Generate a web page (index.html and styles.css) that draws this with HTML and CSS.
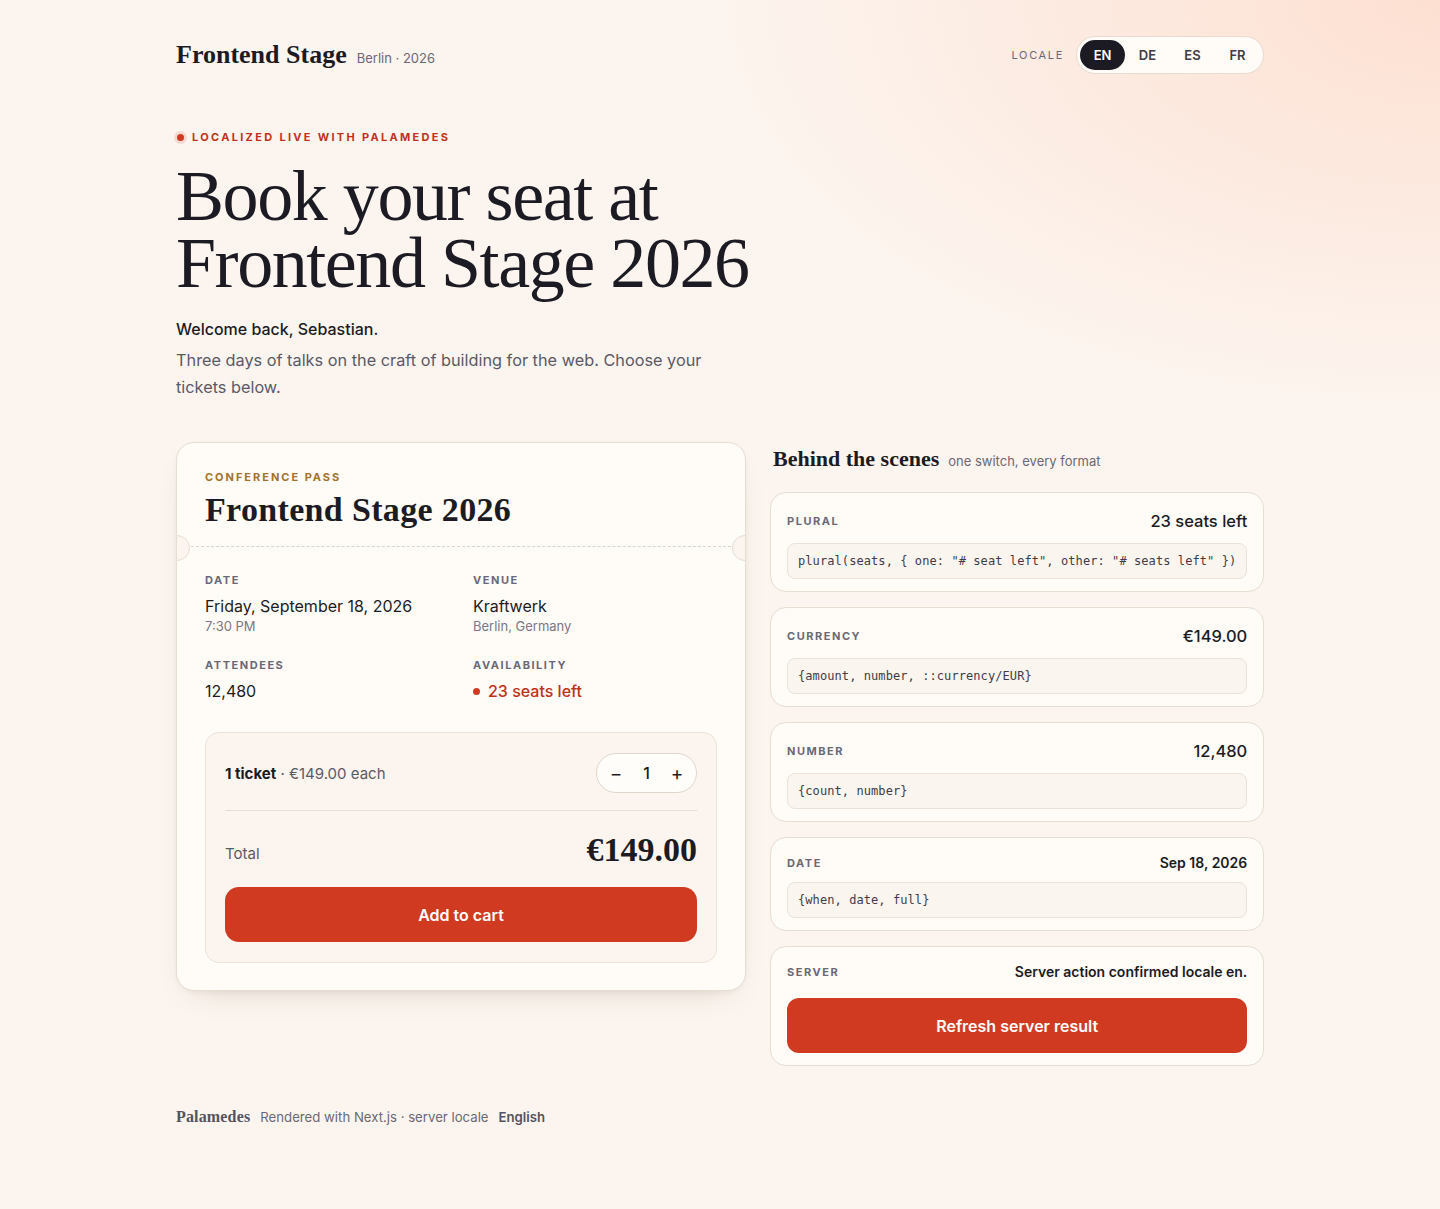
FILE: index.html
```html
<!DOCTYPE html>
<html lang="en">
<head>
    <meta charset="UTF-8">
    <meta name="viewport" content="width=device-width, initial-scale=1.0">
    <title>Frontend Stage 2026 · Tickets</title>
    <link rel="stylesheet" href="styles.css">
</head>
<body>
    <div class="page">
        <header class="header">
            <div class="brand">
                <span class="brand-name">Frontend Stage</span>
                <span class="brand-meta">Berlin · 2026</span>
            </div>
            <div class="locale">
                <span class="locale-label">Locale</span>
                <div class="locale-switch">
                    <button class="locale-btn active">EN</button>
                    <button class="locale-btn">DE</button>
                    <button class="locale-btn">ES</button>
                    <button class="locale-btn">FR</button>
                </div>
            </div>
        </header>

        <section class="hero">
            <div class="eyebrow"><span class="live-dot"></span>Localized live with Palamedes</div>
            <h1>Book your seat at<br>Frontend Stage 2026</h1>
            <p class="welcome">Welcome back, Sebastian.</p>
            <p class="lead">Three days of talks on the craft of building for the web. Choose your tickets below.</p>
        </section>

        <main class="layout">
            <!-- ticket card -->
            <div class="ticket">
                <div class="ticket-head">
                    <div class="kicker">Conference pass</div>
                    <h2>Frontend Stage 2026</h2>
                </div>
                <div class="perforation"></div>
                <div class="ticket-body">
                    <div class="facts">
                        <div class="fact">
                            <div class="label">Date</div>
                            <div class="value">Friday, September 18, 2026</div>
                            <div class="sub">7:30 PM</div>
                        </div>
                        <div class="fact">
                            <div class="label">Venue</div>
                            <div class="value">Kraftwerk</div>
                            <div class="sub">Berlin, Germany</div>
                        </div>
                        <div class="fact">
                            <div class="label">Attendees</div>
                            <div class="value">12,480</div>
                        </div>
                        <div class="fact">
                            <div class="label">Availability</div>
                            <div class="value seats"><span class="seat-dot"></span>23 seats left</div>
                        </div>
                    </div>

                    <div class="order">
                        <div class="order-row">
                            <div class="order-qty"><strong>1 ticket</strong> · €149.00 each</div>
                            <div class="stepper">
                                <button>−</button>
                                <span>1</span>
                                <button>+</button>
                            </div>
                        </div>
                        <div class="total-row">
                            <span class="total-label">Total</span>
                            <span class="total-value">€149.00</span>
                        </div>
                        <button class="btn-primary cart">Add to cart</button>
                    </div>
                </div>
            </div>

            <!-- formatter examples -->
            <aside class="scenes">
                <div class="scenes-title">
                    <h3>Behind the scenes</h3>
                    <span>one switch, every format</span>
                </div>

                <div class="fmt">
                    <div class="fmt-row">
                        <span class="label">Plural</span>
                        <span class="fmt-value">23 seats left</span>
                    </div>
                    <code>plural(seats, { one: "# seat left", other: "# seats left" })</code>
                </div>

                <div class="fmt">
                    <div class="fmt-row">
                        <span class="label">Currency</span>
                        <span class="fmt-value">€149.00</span>
                    </div>
                    <code>{amount, number, ::currency/EUR}</code>
                </div>

                <div class="fmt">
                    <div class="fmt-row">
                        <span class="label">Number</span>
                        <span class="fmt-value">12,480</span>
                    </div>
                    <code>{count, number}</code>
                </div>

                <div class="fmt">
                    <div class="fmt-row small">
                        <span class="label">Date</span>
                        <span class="fmt-value">Sep 18, 2026</span>
                    </div>
                    <code>{when, date, full}</code>
                </div>

                <div class="fmt">
                    <div class="fmt-row small">
                        <span class="label">Server</span>
                        <span class="fmt-value">Server action confirmed locale en.</span>
                    </div>
                    <button class="btn-primary refresh">Refresh server result</button>
                </div>
            </aside>
        </main>

        <footer class="footer">
            <span class="footer-brand">Palamedes</span>
            <span>Rendered with Next.js · server locale</span>
            <strong>English</strong>
        </footer>
    </div>
</body>
</html>
```

FILE: styles.css
```css
* {
    box-sizing: border-box;
}
html, body {
    margin: 0;
    min-height: 100%;
}
body {
    font-family: Inter, "Noto Sans", sans-serif;
    color: #1c1b24;
    background:
        radial-gradient(ellipse 1000px 560px at 100% 0%, #fde0d2 0%, rgba(253, 224, 210, 0) 75%),
        #fcf5ef;
    min-height: 1209px;
}
button {
    font-family: inherit;
    border: none;
    background: none;
    cursor: pointer;
}
.page {
    max-width: 1088px;
    margin: 0 auto;
    padding: 36px 0 60px;
}

/* header */
.header {
    display: flex;
    align-items: center;
    justify-content: space-between;
}
.brand {
    display: flex;
    align-items: baseline;
    gap: 10px;
}
.brand-name {
    font-family: "Liberation Serif", serif;
    font-weight: 700;
    font-size: 26px;
}
.brand-meta {
    font-size: 13px;
    color: #6b6875;
}
.locale {
    display: flex;
    align-items: center;
    gap: 12px;
}
.locale-label {
    font-size: 11px;
    letter-spacing: 0.15em;
    text-transform: uppercase;
    color: #6b6875;
}
.locale-switch {
    display: flex;
    padding: 3px;
    background: #fffbf7;
    border: 1px solid #e8dcd2;
    border-radius: 999px;
}
.locale-btn {
    width: 45px;
    height: 30px;
    border-radius: 999px;
    font-size: 13px;
    font-weight: 600;
    color: #3e3c47;
}
.locale-btn.active {
    background: #1c1b24;
    color: #fff;
}

/* hero */
.hero {
    margin-top: 56px;
}
.eyebrow {
    display: flex;
    align-items: center;
    gap: 8px;
    font-size: 11px;
    font-weight: 700;
    letter-spacing: 0.21em;
    text-transform: uppercase;
    color: #c0311c;
}
.live-dot {
    width: 7px;
    height: 7px;
    margin-left: 1px;
    border-radius: 50%;
    background: #d03a21;
    box-shadow: 0 0 0 3px rgba(208, 58, 33, 0.15);
}
.hero h1 {
    margin: 19px 0 0;
    font-family: "Liberation Serif", serif;
    font-weight: 400;
    font-size: 72px;
    line-height: 67px;
    letter-spacing: -0.02em;
}
.welcome {
    margin: 22px 0 0;
    font-size: 16px;
    font-weight: 500;
}
.lead {
    margin: 8px 0 0;
    max-width: 560px;
    font-size: 16.3px;
    line-height: 27px;
    color: #5b5966;
}

/* layout */
.layout {
    display: grid;
    grid-template-columns: 570px 1fr;
    gap: 24px;
    align-items: start;
    margin-top: 41px;
}

/* ticket */
.ticket {
    position: relative;
    overflow: hidden;
    background: #fffbf6;
    border: 1px solid #e6ddd3;
    border-radius: 18px;
    box-shadow: 0 12px 30px -18px rgba(60, 40, 20, 0.25), 0 2px 4px rgba(60, 40, 20, 0.04);
}
.ticket-head {
    padding: 27px 28px 16px;
}
.kicker {
    font-size: 11px;
    font-weight: 700;
    letter-spacing: 0.18em;
    text-transform: uppercase;
    color: #a3732c;
}
.ticket-head h2 {
    margin: 6px 0 0;
    font-family: "Liberation Serif", serif;
    font-weight: 700;
    font-size: 34px;
    line-height: 40px;
    letter-spacing: 0.01em;
}
.perforation {
    position: relative;
    margin: 0 14px;
    border-top: 1px dashed #ddd3c8;
}
.perforation::before,
.perforation::after {
    content: "";
    position: absolute;
    top: -12px;
    width: 24px;
    height: 24px;
    border-radius: 50%;
    background: #fcf4ee;
    border: 1px solid #e6ddd3;
}
.perforation::before {
    left: -27px;
}
.perforation::after {
    right: -27px;
}
.ticket-body {
    padding: 26px 28px 27px;
}
.facts {
    display: grid;
    grid-template-columns: 1fr 1fr;
    row-gap: 24px;
    column-gap: 24px;
}
.label {
    font-size: 11px;
    font-weight: 700;
    letter-spacing: 0.14em;
    text-transform: uppercase;
    color: #6b6875;
}
.fact .value {
    margin-top: 8px;
    font-size: 16px;
    line-height: 22px;
}
.fact .sub {
    margin-top: 1px;
    font-size: 13px;
    color: #7a7784;
}
.seats {
    display: flex;
    align-items: center;
    gap: 8px;
    color: #c0311c;
    font-weight: 500;
}
.seat-dot {
    width: 7px;
    height: 7px;
    border-radius: 50%;
    background: #d03a21;
}

/* order box */
.order {
    margin-top: 30px;
    padding: 20px 19px 20px;
    background: #fcf5ef;
    border: 1px solid #ebe2d9;
    border-radius: 14px;
}
.order-row {
    display: flex;
    align-items: center;
    justify-content: space-between;
    padding-bottom: 17px;
    border-bottom: 1px solid #e6ddd3;
}
.order-qty {
    font-size: 15px;
    color: #5b5966;
}
.order-qty strong {
    color: #1c1b24;
    font-weight: 700;
}
.stepper {
    display: flex;
    align-items: center;
    height: 40px;
    width: 101px;
    justify-content: space-between;
    padding: 0 8px;
    background: #fffdfa;
    border: 1px solid #e0d6cb;
    border-radius: 999px;
}
.stepper button {
    width: 22px;
    font-size: 19px;
    color: #1c1b24;
    padding: 0;
}
.stepper span {
    font-size: 16px;
    font-weight: 500;
}
.total-row {
    display: flex;
    align-items: center;
    justify-content: space-between;
    padding: 21px 0 19px;
}
.total-label {
    font-size: 15px;
    color: #5b5966;
    margin-top: 6px;
}
.total-value {
    font-family: "Liberation Serif", serif;
    font-weight: 700;
    font-size: 34px;
    line-height: 36px;
}
.btn-primary {
    display: block;
    width: 100%;
    background: #d03a21;
    color: #fff;
    font-size: 16px;
    font-weight: 600;
    border-radius: 14px;
}
.cart {
    height: 55px;
}

/* formatter panel */
.scenes {
    display: flex;
    flex-direction: column;
    gap: 15px;
}
.scenes-title {
    display: flex;
    align-items: baseline;
    gap: 9px;
    margin: 4px 0 5px 3px;
}
.scenes-title h3 {
    margin: 0;
    font-family: "Liberation Serif", serif;
    font-weight: 700;
    font-size: 22px;
}
.scenes-title span {
    font-size: 13px;
    color: #6b6875;
}
.fmt {
    display: flex;
    flex-direction: column;
    gap: 10px;
    padding: 16px 16px 12px;
    background: #fffbf6;
    border: 1px solid #e6ddd3;
    border-radius: 16px;
}
.fmt-row {
    display: flex;
    align-items: center;
    justify-content: space-between;
    min-height: 24px;
}
.fmt-value {
    font-size: 16.5px;
    font-weight: 500;
}
.fmt-row.small {
    min-height: 18px;
    line-height: 18px;
}
.fmt-row.small .fmt-value {
    font-size: 14px;
    font-weight: 600;
}
.fmt code {
    display: block;
    padding: 9px 10px;
    font-family: "DejaVu Sans Mono", "Liberation Mono", monospace;
    font-size: 12px;
    line-height: 16px;
    letter-spacing: 0.08px;
    color: #3e3c47;
    background: #fbf5ef;
    border: 1px solid #ebe2d9;
    border-radius: 8px;
    white-space: nowrap;
}
.refresh {
    height: 55px;
    margin-top: 7px;
    border-radius: 12px;
}

/* footer */
.footer {
    display: flex;
    align-items: baseline;
    gap: 10px;
    margin-top: 42px;
    font-size: 13.2px;
    color: #6b6875;
}
.footer-brand {
    font-family: "Liberation Serif", serif;
    font-weight: 700;
    font-size: 16px;
    letter-spacing: 0.01em;
    color: #55535f;
}
.footer strong {
    color: #55535f;
    font-weight: 600;
}
```
